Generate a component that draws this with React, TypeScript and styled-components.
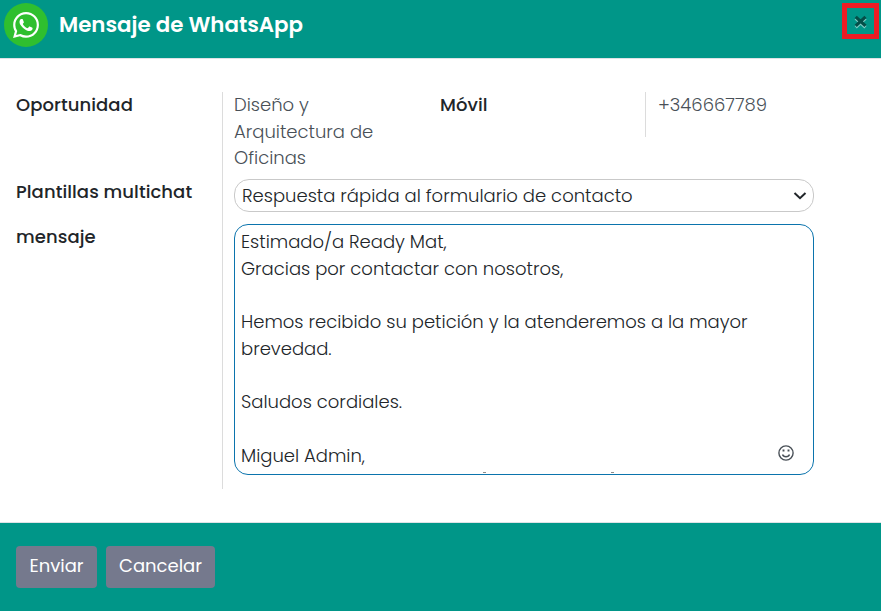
import React from "react";
import styled, { createGlobalStyle } from "styled-components";

const GlobalStyle = createGlobalStyle`
  * { box-sizing: border-box; }
  body {
    margin: 0;
    background: #fff;
    font-family: "Poppins", "Inter", sans-serif;
    font-size: 18px;
    font-weight: 300;
    line-height: 26.7px;
    color: #212529;
  }
`;

const Dialog = styled.div`
  display: flex;
  flex-direction: column;
  height: 611px;
  overflow: hidden;
`;

const Header = styled.header`
  display: flex;
  align-items: flex-start;
  height: 58px;
  flex: none;
  background: #009688;
  padding: 3px 2px 0 4px;
`;

const Logo = styled.svg`
  width: 44px;
  height: 44px;
  flex: none;
`;

const Title = styled.h4`
  margin: 7px 0 0 11px;
  font-size: 21.35px;
  font-weight: 600;
  line-height: 30px;
  color: #fff;
`;

const CloseButton = styled.button`
  display: flex;
  align-items: center;
  justify-content: center;
  width: 37px;
  height: 36px;
  margin-left: auto;
  padding: 1px 0 0;
  background: transparent;
  border: 5px solid #ed1c24;
`;

const Body = styled.main`
  flex: none;
  height: 465px;
  padding: 33px 67px 0 16px;
  border-top: 1px solid #dee2e6;
  border-bottom: 1px solid #dee2e6;
`;

const Form = styled.div`
  display: grid;
  grid-template-columns: 206px 1fr;
  height: 397px;
`;

const Labels = styled.div`
  display: grid;
  grid-template-rows: 87px 45px 1fr;
`;

const Label = styled.label`
  font-weight: 500;
  letter-spacing: 0.07px;
  color: #212529;
`;

const Values = styled.div`
  display: flex;
  flex-direction: column;
  border-left: 1px solid #dcdcdc;
  padding-left: 11px;
`;

const ContactRow = styled.div`
  display: grid;
  grid-template-columns: 206px 205px 1fr;
  height: 87px;
`;

const Value = styled.span`
  color: #495057;
  max-width: 160px;
`;

const PhoneCell = styled.div`
  height: 45px;
  border-left: 1px solid #dcdcdc;
  padding-left: 12px;
`;

const Select = styled.div`
  display: flex;
  align-items: center;
  justify-content: space-between;
  height: 33px;
  flex: none;
  padding: 1px 6px 0 7px;
  border: 1px solid #c9c9c9;
  border-radius: 15px;
`;

const Message = styled.div`
  position: relative;
  height: 251px;
  margin-top: 12px;
  padding: 4px 6px;
  border: 1px solid #0b74ad;
  border-radius: 14px;
  white-space: pre-wrap;
  overflow: hidden;
`;

const EmojiButton = styled.svg`
  position: absolute;
  right: 19px;
  bottom: 13px;
  width: 16px;
  height: 16px;
`;

const ClippedAccent = styled.i<{ $left: number }>`
  position: absolute;
  left: ${(p) => p.$left}px;
  bottom: 1px;
  width: 3px;
  height: 1px;
  background: #8b8b8b;
`;

const Footer = styled.footer`
  display: flex;
  flex: 1;
  align-items: flex-start;
  gap: 9px;
  padding: 23px 16px;
  background: #009688;
`;

const Button = styled.button<{ $width: number }>`
  width: ${(p) => p.$width}px;
  height: 42px;
  padding: 0 0 3px;
  border: 0;
  border-radius: 4px;
  background: #75798d;
  color: #fff;
  font: 400 18px/27px "Poppins", "Inter", sans-serif;
`;

const message = `Estimado/a Ready Mat,
Gracias por contactar con nosotros,

Hemos recibido su petición y la atenderemos a la mayor brevedad.

Saludos cordiales.

Miguel Admin,`;

export default function App() {
  return (
    <Dialog>
      <GlobalStyle />
      <Header>
        <Logo viewBox="0 0 44 44">
          <circle cx="22" cy="22" r="22" fill="#2fbf2f" />
          <g transform="translate(9 9) scale(1.0833)">
            <path
              fill="#fff"
              d="M17.472 14.382c-.297-.149-1.758-.867-2.03-.967-.273-.099-.471-.148-.67.15-.197.297-.767.966-.94 1.164-.173.199-.347.223-.644.075-.297-.15-1.255-.463-2.39-1.475-.883-.788-1.48-1.761-1.653-2.059-.173-.297-.018-.458.13-.606.134-.133.298-.347.446-.52.149-.174.198-.298.298-.497.099-.198.05-.371-.025-.52-.075-.149-.669-1.612-.916-2.207-.242-.579-.487-.5-.669-.51-.173-.008-.371-.01-.57-.01-.198 0-.52.074-.792.372-.272.297-1.04 1.016-1.04 2.479 0 1.462 1.065 2.875 1.213 3.074.149.198 2.096 3.2 5.077 4.487.709.306 1.262.489 1.694.625.712.227 1.36.195 1.871.118.571-.085 1.758-.719 2.006-1.413.248-.694.248-1.289.173-1.413-.074-.124-.272-.198-.57-.347m-5.421 7.403h-.004a9.87 9.87 0 01-5.031-1.378l-.361-.214-3.741.982.998-3.648-.235-.374a9.86 9.86 0 01-1.51-5.26c.001-5.45 4.436-9.884 9.888-9.884 2.64 0 5.122 1.03 6.988 2.898a9.825 9.825 0 012.893 6.994c-.003 5.45-4.437 9.884-9.885 9.884m8.413-18.297A11.815 11.815 0 0012.05 0C5.495 0 .16 5.335.157 11.892c0 2.096.547 4.142 1.588 5.945L.057 24l6.305-1.654a11.882 11.882 0 005.683 1.448h.005c6.554 0 11.89-5.335 11.893-11.893a11.821 11.821 0 00-3.48-8.413z"
            />
          </g>
        </Logo>
        <Title>Mensaje de WhatsApp</Title>
        <CloseButton aria-label="Cerrar">
          <svg width="14" height="14" viewBox="0 0 14 14" fill="none" strokeWidth="3.2">
            <path d="M1.700 3.200l9.800 9M11.500 3.200l-9.800 9" stroke="#7fcac3" />
            <path d="M1.700 1.900l9.800 9M11.500 1.900l-9.800 9" stroke="#044f48" />
          </svg>
        </CloseButton>
      </Header>
      <Body>
        <Form>
          <Labels>
            <Label>Oportunidad</Label>
            <Label>Plantillas multichat</Label>
            <Label>mensaje</Label>
          </Labels>
          <Values>
            <ContactRow>
              <Value>Diseño y Arquitectura de Oficinas</Value>
              <Label>Móvil</Label>
              <PhoneCell>
                <Value>+346667789</Value>
              </PhoneCell>
            </ContactRow>
            <Select role="combobox">
              Respuesta rápida al formulario de contacto
              <svg width="14" height="10" viewBox="0 0 14 10" fill="none">
                <path d="M1.5 2l5.5 5.2L12.500 2" stroke="#212529" strokeWidth="2" />
              </svg>
            </Select>
            <Message role="textbox">
              {message}
              <ClippedAccent $left={248} />
              <ClippedAccent $left={376} />
              <EmojiButton viewBox="0 0 16 16" fill="none" stroke="#495057" strokeWidth="1.4">
                <circle cx="8" cy="8" r="7.1" />
                <path d="M4.500 9.500c1 3 6 3 7 0" />
                <path d="M5.500 4.600v2M10.500 4.600v2" strokeWidth="1.900" />
              </EmojiButton>
            </Message>
          </Values>
        </Form>
      </Body>
      <Footer>
        <Button $width={81}>Enviar</Button>
        <Button $width={109}>Cancelar</Button>
      </Footer>
    </Dialog>
  );
}
